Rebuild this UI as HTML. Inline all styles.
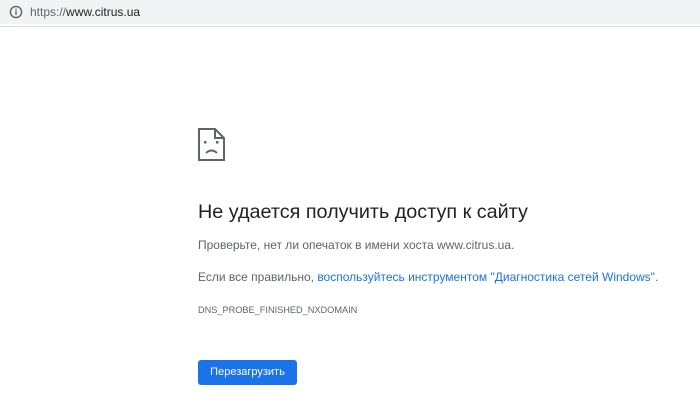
<!DOCTYPE html>
<html><head><meta charset="utf-8"><style>
body{margin:0;width:700px;height:405px;background:#fff;font-family:"Liberation Sans","DejaVu Sans",sans-serif;position:relative;overflow:hidden}
.bar{position:absolute;left:0;top:0;width:700px;height:24px;background:#f1f3f4}
.bar .url{position:absolute;left:30px;top:5px;font-size:12px;color:#5f6368}
.bar .url b{font-weight:normal;color:#202124}
.line{position:absolute;left:0;top:26px;width:700px;height:1px;background:#dadce0}
.t{position:absolute;left:198px;white-space:nowrap}
h1{margin:0;font-size:19.8px;font-weight:normal;color:#202124;top:201px}
.p{font-size:12px;color:#5f6368}
a{color:#1a73e8;text-decoration:none}
.btn{position:absolute;left:198px;top:360px;width:99px;height:25px;background:#1a73e8;border-radius:3px;color:#fff;font-size:11px;text-align:center;line-height:25px}
</style></head><body>
<div class="bar">
<svg style="position:absolute;left:9px;top:5px" width="14" height="14" viewBox="0 0 14 14"><circle cx="7" cy="7" r="5.6" fill="none" stroke="#5f6368" stroke-width="1.4"/><rect x="6.3" y="6" width="1.4" height="4" fill="#5f6368"/><rect x="6.3" y="3.8" width="1.4" height="1.4" fill="#5f6368"/></svg>
<div class="url">https://<b>www.citrus.ua</b></div>
</div>
<div class="line"></div>
<svg style="position:absolute;left:198px;top:128px" width="28" height="33" viewBox="0 0 28 33"><path d="M1 1H17L26 10V32H1Z" fill="none" stroke="#5f6368" stroke-width="2"/><path d="M17 1V10H26" fill="none" stroke="#5f6368" stroke-width="2"/><rect x="6" y="13" width="2.5" height="2.5" fill="#5f6368"/><rect x="18" y="13" width="2.5" height="2.5" fill="#5f6368"/><path d="M8 25Q13.5 20 19 25" fill="none" stroke="#5f6368" stroke-width="1.8"/></svg>
<h1 class="t">Не удается получить доступ к сайту</h1>
<div class="t p" style="top:238px">Проверьте, нет ли опечаток в имени хоста www.citrus.ua.</div>
<div class="t p" style="top:270px">Если все правильно, <a>воспользуйтесь инструментом "Диагностика сетей Windows"</a>.</div>
<div class="t" style="top:305px;font-size:9.2px;color:#5f6368">DNS_PROBE_FINISHED_NXDOMAIN</div>
<div class="btn">Перезагрузить</div>
</body></html>
